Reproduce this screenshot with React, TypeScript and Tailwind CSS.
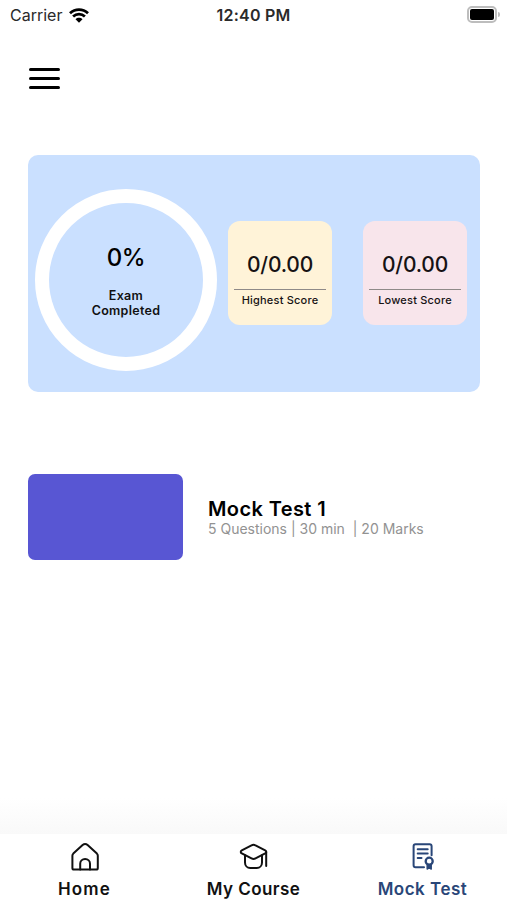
import { ReactNode } from "react";

const HomeIcon = () => (
  <svg width="30" height="30" viewBox="0 0 30 30" fill="none" stroke="currentColor" strokeWidth="2" strokeLinecap="round" strokeLinejoin="round">
    <path d="M2.400 13.800c0-.9.3-1.600.9-2.200L12.600 3c1.500-1.300 3.500-1.300 5 0l9.300 8.600c.6.6.9 1.300.9 2.200V26c0 1-.6 1.600-1.600 1.600H4C3 27.600 2.400 27 2.400 26z" />
    <path d="M10.200 27.500v-5.700c0-2.700 2-4.700 4.900-4.700s4.900 2 4.900 4.700v5.700" />
  </svg>
);

const CourseIcon = () => (
  <svg width="30" height="30" viewBox="0 0 30 30" fill="none" stroke="currentColor" strokeWidth="2" strokeLinecap="round" strokeLinejoin="round">
    <path d="M2.800 8.400 12.500 3.400c1.300-.7 2.700-.7 4 0l9.700 5c1.400.7 1.400 2.300 0 3l-9.700 5c-1.300.7-2.700.7-4 0l-9.700-5c-1.400-.7-1.400-2.300 0-3z" />
    <path d="M6 13.300v7.200c0 3 2.200 5.500 5.200 5.500h6.600c3 0 5.200-2.500 5.200-5.500v-7.200M27.200 10v14" />
  </svg>
);

const TestIcon = () => (
  <svg width="30" height="30" viewBox="0 0 30 30" fill="none" stroke="currentColor" strokeWidth="2" strokeLinecap="round" strokeLinejoin="round">
    <path d="M16 25.200H7.500c-1.200 0-1.900-.7-1.900-1.900V4.200c0-1.200.7-1.900 1.900-1.900h14.200c1.200 0 1.900.7 1.900 1.900v9" />
    <path d="M9.700 7.200h10M9.700 11.600h10M9.700 16h3.800" />
    <circle cx="21.200" cy="19.200" r="3.500" strokeWidth="2.300" />
    <path d="M19.200 22.800v4.200l2-1.300 2 1.300v-4.200" fill="currentColor" strokeWidth="1.500" />
  </svg>
);

const tabs = [
  { label: "Home", icon: <HomeIcon />, className: "text-[#111111] tracking-[1.1px]" },
  { label: "My Course", icon: <CourseIcon />, className: "text-[#111111] tracking-[0.45px]" },
  { label: "Mock Test", icon: <TestIcon />, className: "text-[#294678] tracking-[0.5px]" },
];

function StatusBar() {
  return (
    <header className="grid h-[30px] grid-cols-3 items-center pr-[7px] pl-[10px] text-[16px] leading-none text-[#2a2a2a]">
      <div className="flex items-center gap-[7px]">
        <span>Carrier</span>
        <svg width="20" height="15" viewBox="0 0 20 15" fill="none" stroke="#000" strokeWidth="2.800">
          <path d="M1 5.200c5.200-4.900 12.800-4.900 18 0M4.100 8.500c3.400-3.100 8.400-3.100 11.800 0" />
          <path d="M6.500 11.200c2-1.900 5-1.900 7 0L10 14.800z" fill="#000" stroke="none" />
        </svg>
      </div>
      <span className="pr-[3px] text-center font-semibold tracking-[0.2px] whitespace-nowrap">12:40 PM</span>
      <div className="-mt-[2px] flex items-center justify-end gap-px">
        <div className="flex h-[17px] w-[30px] rounded-[5px] border-2 border-[#bdbdbd] p-px">
          <div className="flex-1 rounded-[2px] bg-black"></div>
        </div>
        <div className="h-[5px] w-[2px] rounded-r-full bg-[#bdbdbd]"></div>
      </div>
    </header>
  );
}

function ScoreCard({ className, label, children }: { className: string; label: ReactNode; children: ReactNode }) {
  return (
    <div className={`flex h-[104px] w-[104px] flex-col items-center rounded-[12px] px-[6px] pt-[31px] text-[#161214] ${className}`}>
      <div className="text-[21px] leading-[26px] font-medium tracking-[-0.2px]">{children}</div>
      <div className="mt-[11px] h-px w-full bg-[#8f8a88]"></div>
      <div className="mt-[3px] text-[11px] leading-[14px] font-medium tracking-[0.2px] whitespace-nowrap">{label}</div>
    </div>
  );
}

export default function App() {
  return (
    <div className="flex h-[900px] w-[507px] flex-col overflow-hidden bg-white font-['Inter','Liberation_Sans',sans-serif] text-black">
      <StatusBar />

      {/* Menu button */}
      <div className="px-[29px] pt-[38px]">
        <button className="flex w-[31px] flex-col gap-[6px]" aria-label="Menu">
          <span className="h-[3px] w-full rounded-full bg-black"></span>
          <span className="h-[3px] w-full rounded-full bg-black"></span>
          <span className="h-[3px] w-full rounded-full bg-black"></span>
        </button>
      </div>

      {/* Summary */}
      <main className="flex-1 px-[28px] pt-[65.500px]">
        <section className="flex h-[237px] w-[452px] items-center rounded-[10px] bg-[#cae0ff] pl-[7px]">
          <div className="mt-[14px] flex h-[182px] w-[182px] flex-col items-center rounded-full border-[14px] border-white pt-[40px]">
            <div className="text-[24px] leading-[30px] font-medium tracking-[-0.5px]">0%</div>
            <div className="mt-[15px] text-center text-[12.500px] leading-[15px] font-semibold tracking-[0.3px] text-[#111111]">
              Exam
              <br />
              Completed
            </div>
          </div>
          <ScoreCard className="ml-[11px] bg-[#fff3d8]" label="Highest Score">0/0.00</ScoreCard>
          <ScoreCard className="ml-[31px] bg-[#f8e5eb]" label="Lowest Score">0/0.00</ScoreCard>
        </section>

        {/* Test list */}
        <section className="mt-[82px] flex items-center">
          <div className="h-[86px] w-[155px] rounded-[7px] bg-[#5856d3]"></div>
          <div className="mt-[3px] ml-[25px]">
            <h2 className="text-[20px] leading-[22px] font-semibold tracking-[0.4px]">Mock Test 1</h2>
            <p className="text-[14px] leading-[18px] whitespace-pre text-[#929292]">5 Questions | 30 min  | 20 Marks</p>
          </div>
        </section>
      </main>

      <div className="h-[36px] bg-linear-to-b from-white to-[#f9f9f9]"></div>
      <nav className="grid h-[66px] grid-cols-3 bg-white">
        {tabs.map((tab) => (
          <div key={tab.label} className={`flex flex-col items-center pt-[8px] ${tab.className}`}>
            {tab.icon}
            <span className="mt-[7px] text-[17px] leading-[20px] font-semibold">{tab.label}</span>
          </div>
        ))}
      </nav>
    </div>
  );
}
